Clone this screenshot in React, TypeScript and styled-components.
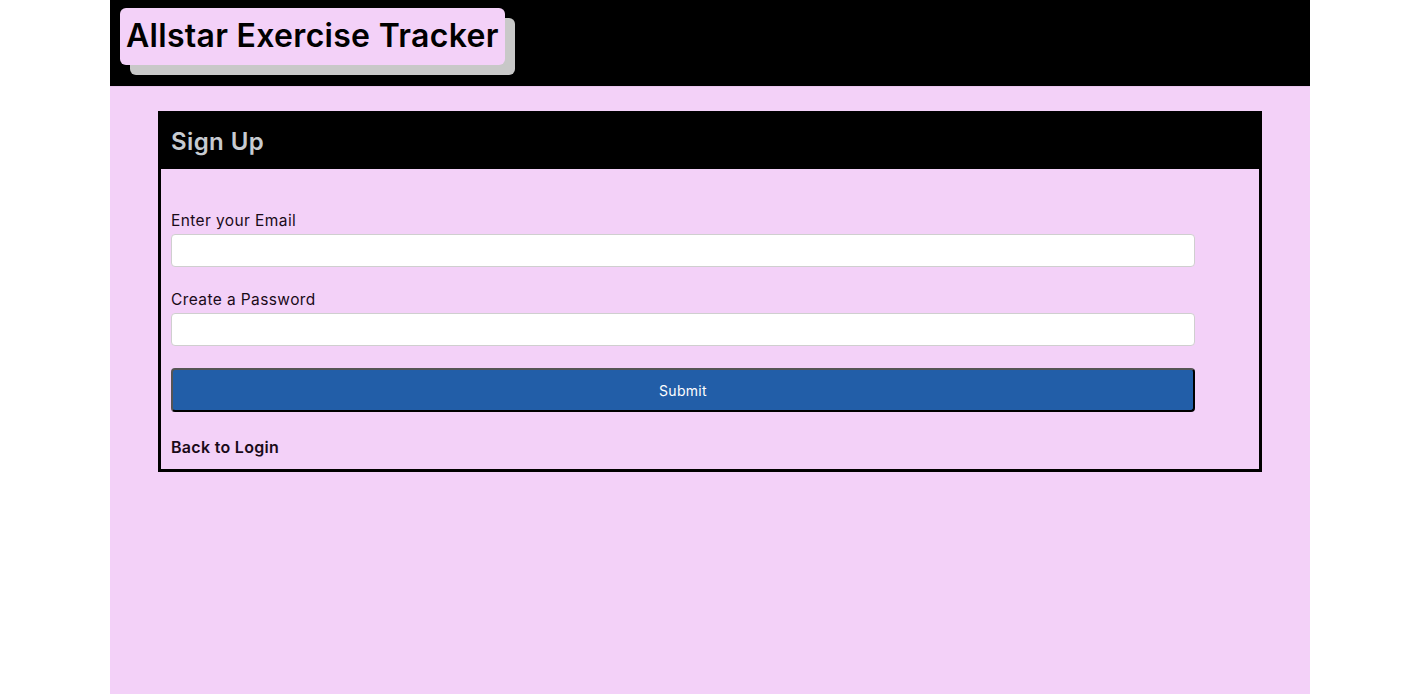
import React, { useState } from "react";
import styled, { createGlobalStyle } from "styled-components";

const GlobalStyle = createGlobalStyle`
  html, body {
    margin: 0;
    padding: 0;
    background: #ffffff;
    font-family: "Inter", "Noto Sans", sans-serif;
  }
  * {
    box-sizing: border-box;
  }
`;

const Page = styled.div`
  width: 1200px;
  min-height: 694px;
  margin: 0 0 0 110px;
  background: #f3d1f8;
`;

const Header = styled.header`
  height: 87px;
  background: #000;
  border-bottom: 1px solid #e9c4ee;
  padding: 8px 10px;
`;

const Title = styled.h1`
  display: inline-block;
  margin: 0;
  padding: 7px 6px 8px;
  background: #f3d1f8;
  color: #000;
  border-radius: 6px;
  box-shadow: 10px 10px 0 #c8c8c8;
  font-size: 32px;
  font-weight: 600;
  letter-spacing: 0.3px;
  line-height: 42px;
`;

const Main = styled.main`
  padding: 24px 48px;
`;

const Card = styled.section`
  border: 3px solid #000;
  border-top: none;
`;

const CardHeader = styled.div`
  background: #000;
  height: 58px;
  padding: 0 10px;
  display: flex;
  align-items: center;
`;

const CardTitle = styled.h2`
  margin: 3px 0 0;
  color: #c7cbd1;
  font-size: 24px;
  font-weight: 600;
  letter-spacing: 0.4px;
`;

const CardBody = styled.form`
  padding: 41px 64px 11px 10px;
  display: flex;
  flex-direction: column;
`;

const Field = styled.div`
  display: flex;
  flex-direction: column;
  margin-bottom: 22px;
`;

const Label = styled.label`
  font-size: 15.5px;
  line-height: 22px;
  letter-spacing: 0.4px;
  color: #1a0a18;
  margin-bottom: 2px;
`;

const Input = styled.input`
  height: 33px;
  border: 1px solid #cfcfcf;
  border-radius: 4px;
  background: #fff;
  padding: 0 8px;
  font-size: 15px;
  outline: none;
`;

const SubmitButton = styled.button`
  height: 44px;
  background: #225ea8;
  color: #fff;
  border: 2px outset #555;
  border-right-color: #000;
  border-bottom-color: #000;
  border-radius: 4px;
  font-family: inherit;
  font-size: 14px;
  letter-spacing: 0.3px;
  cursor: pointer;
`;

const BackLink = styled.a`
  margin-top: 24px;
  font-size: 16px;
  line-height: 22px;
  font-weight: 600;
  letter-spacing: 0.3px;
  color: #1a0a18;
  text-decoration: none;
  cursor: pointer;
`;

export default function App() {
  const [email, setEmail] = useState("");
  const [password, setPassword] = useState("");

  return (
    <>
      <GlobalStyle />
      <Page>
        <Header>
          <Title>Allstar Exercise Tracker</Title>
        </Header>
        <Main>
          <Card>
            <CardHeader>
              <CardTitle>Sign Up</CardTitle>
            </CardHeader>
            <CardBody onSubmit={(e) => e.preventDefault()}>
              <Field>
                <Label htmlFor="email">Enter your Email</Label>
                <Input
                  id="email"
                  type="email"
                  value={email}
                  onChange={(e) => setEmail(e.target.value)}
                />
              </Field>
              <Field>
                <Label htmlFor="password">Create a Password</Label>
                <Input
                  id="password"
                  type="password"
                  value={password}
                  onChange={(e) => setPassword(e.target.value)}
                />
              </Field>
              <SubmitButton type="submit">Submit</SubmitButton>
              <BackLink>Back to Login</BackLink>
            </CardBody>
          </Card>
        </Main>
      </Page>
    </>
  );
}
